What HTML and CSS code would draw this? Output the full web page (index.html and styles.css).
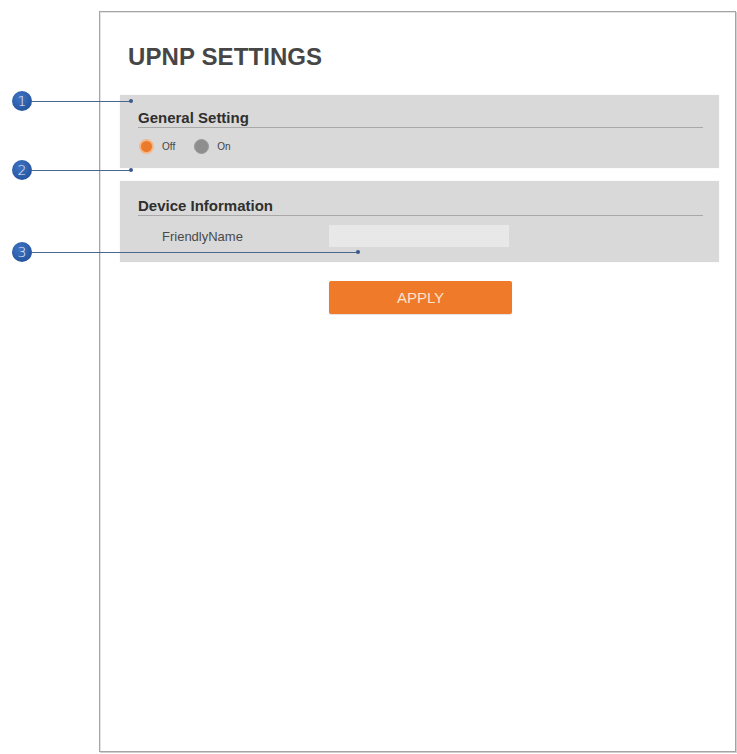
FILE: index.html
```html
<!DOCTYPE html>
<html>
<head>
<meta charset="utf-8">
<link rel="stylesheet" href="styles.css">
</head>
<body>
<div class="frame">
  <h1 class="title">UPNP SETTINGS</h1>
  <div class="content">
    <section class="panel panel-general">
      <h2 class="panel-heading">General Setting</h2>
      <div class="radios">
        <span class="radio radio-on"></span><span class="radio-label">Off</span>
        <span class="radio radio-off"></span><span class="radio-label">On</span>
      </div>
    </section>
    <section class="panel panel-device">
      <h2 class="panel-heading">Device Information</h2>
      <div class="field-row">
        <span class="field-label">FriendlyName</span>
        <span class="field-input"></span>
      </div>
    </section>
    <div class="actions">
      <button class="apply">APPLY</button>
    </div>
  </div>
</div>

<div class="callout callout-1"><span class="badge">1</span><span class="leader"></span><span class="dot"></span></div>
<div class="callout callout-2"><span class="badge">2</span><span class="leader"></span><span class="dot"></span></div>
<div class="callout callout-3"><span class="badge">3</span><span class="leader"></span><span class="dot"></span></div>
</body>
</html>
```

FILE: styles.css
```css
html, body {
  margin: 0;
  padding: 0;
  background: #ffffff;
  font-family: "Liberation Sans", Arial, sans-serif;
}

body {
  position: relative;
  width: 737px;
  height: 754px;
  overflow: hidden;
}

.frame {
  box-sizing: border-box;
  margin: 11px 1px 0 99px;
  width: 637px;
  height: 741px;
  border: 1px solid #a4a4a4;
  box-shadow: 1px 1px 0 #d0d0d0, inset 1px 1px 0 #e4e4e4;
  padding: 33px 16px 0 20px;
}

.title {
  margin: 0 0 26px 8px;
  font-size: 24px;
  line-height: 24px;
  font-weight: bold;
  color: #464646;
  letter-spacing: 0.1px;
}

.content {
  display: flex;
  flex-direction: column;
}

.panel {
  background: #d9d9d9;
  padding: 14px 16px 14px 18px;
  box-shadow: 0 0 2px rgba(0,0,0,0.06);
}

.panel-general {
  height: 73px;
  box-sizing: border-box;
}

.panel-device {
  margin-top: 13px;
  padding-top: 16px;
  height: 81px;
  box-sizing: border-box;
}

.panel-heading {
  margin: 0;
  font-size: 15px;
  line-height: 18px;
  font-weight: bold;
  color: #2f2f2f;
  border-bottom: 1px solid #a8a8a8;
}

.radios {
  display: flex;
  align-items: center;
  margin-top: 11px;
  padding-left: 1px;
}

.radio {
  width: 15px;
  height: 15px;
  border-radius: 50%;
  box-sizing: border-box;
}

.radio-on {
  background: #ec7a2b;
  border: 2px solid #f3b78a;
}

.radio-off {
  background: #8e8e8e;
  border: 1px solid #999;
}

.radio-label {
  font-size: 10px;
  color: #444;
  margin-left: 8px;
  margin-right: 19px;
}

.field-row {
  display: flex;
  align-items: center;
  margin-top: 9px;
  padding-left: 24px;
}

.field-label {
  width: 167px;
  font-size: 13px;
  color: #4a4a4a;
}

.field-input {
  width: 180px;
  height: 22px;
  background: #e8e8e8;
}

.actions {
  display: flex;
  justify-content: center;
  margin-top: 19px;
}

.apply {
  width: 183px;
  height: 33px;
  margin-left: 2px;
  border: none;
  border-radius: 2px;
  background: #ee7a2a;
  color: #fbe2cd;
  font-family: "Liberation Sans", Arial, sans-serif;
  font-size: 15px;
  padding: 0;
  box-shadow: 0 1px 1px rgba(0,0,0,0.12);
}

/* annotation callouts */
.callout {
  position: absolute;
  left: 12px;
  display: flex;
  align-items: center;
  height: 20px;
}

.callout-1 { top: 91px; }
.callout-2 { top: 160px; }
.callout-3 { top: 242px; }

.badge {
  width: 20px;
  height: 20px;
  border-radius: 50%;
  background: radial-gradient(circle at 40% 35%, #3f74c4, #1d4a93);
  color: #e8eef8;
  font-family: "DejaVu Sans", sans-serif;
  font-size: 14px;
  font-weight: 300;
  line-height: 20px;
  text-align: center;
  flex: none;
}

.leader {
  height: 1px;
  background: #4b6690;
}

.callout-1 .leader, .callout-2 .leader { width: 98px; }
.callout-3 .leader { width: 325px; }

.dot {
  width: 4px;
  height: 4px;
  border-radius: 50%;
  background: #3a5a8e;
  margin-left: -1px;
  flex: none;
}
```
